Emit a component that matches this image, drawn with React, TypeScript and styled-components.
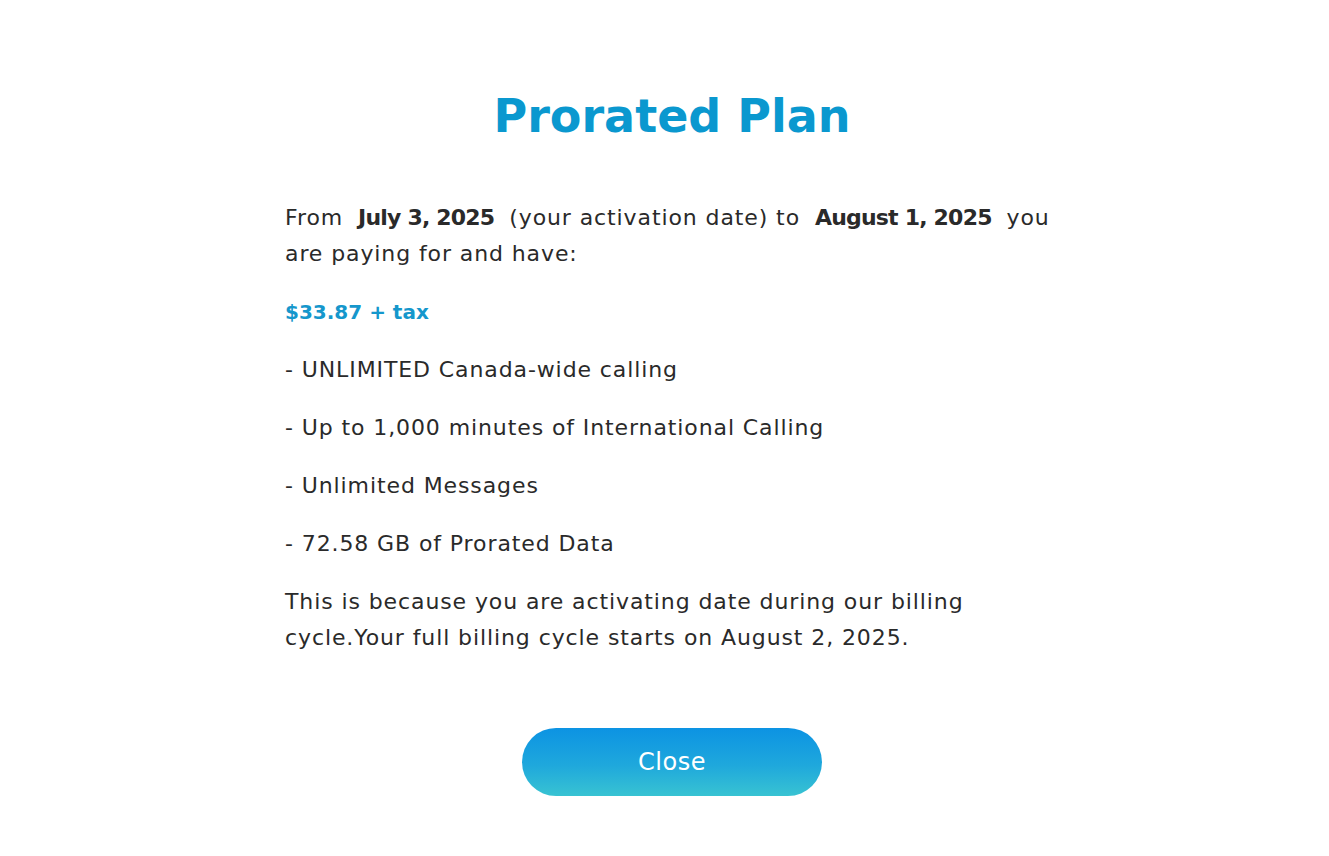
import React from "react";
import styled, { createGlobalStyle } from "styled-components";

const Global = createGlobalStyle`
  html, body { margin: 0; padding: 0; background: #ffffff; }
  body { font-family: "DejaVu Sans", "Open Sans", Arial, sans-serif; }
`;

const Page = styled.div`
  display: flex;
  flex-direction: column;
  align-items: center;
  padding: 84px 0 0 15px;
  min-height: 856px;
  box-sizing: border-box;
`;

const Title = styled.h1`
  margin: 0;
  font-family: "DejaVu Sans", sans-serif;
  font-weight: 700;
  font-size: 46px;
  line-height: 64px;
  color: #0a98cf;
`;

const Body = styled.div`
  width: 774px;
  margin-top: 52px;
  display: flex;
  flex-direction: column;
  gap: 22px;
`;

const Para = styled.p<{ $accent?: boolean }>`
  margin: 0;
  font-size: ${(p) => (p.$accent ? "20px" : "22px")};
  line-height: 36px;
  letter-spacing: ${(p) => (p.$accent ? "0" : "0.9px")};
  font-weight: ${(p) => (p.$accent ? 700 : 400)};
  color: ${(p) => (p.$accent ? "#1597cc" : "#2a2a2a")};
`;

const Strong = styled.b`
  font-weight: 700;
  letter-spacing: -0.8px;
  margin: 0 7px;
`;

const Button = styled.button`
  margin-top: 72px;
  width: 300px;
  height: 68px;
  border: none;
  border-radius: 34px;
  background: linear-gradient(180deg, #0c93e3 0%, #1fa8dc 55%, #38c3d2 100%);
  color: #ffffff;
  font-family: "DejaVu Sans", sans-serif;
  font-size: 24px;
  letter-spacing: 0.5px;
  cursor: pointer;
`;

export default function App() {
  return (
    <>
      <Global />
      <Page>
        <Title>Prorated Plan</Title>
        <Body>
          <Para>
            From <Strong>July 3, 2025</Strong> (your activation date) to{" "}
            <Strong>August 1, 2025</Strong> you are paying for and have:
          </Para>
          <Para $accent>$33.87 + tax</Para>
          <Para>- UNLIMITED Canada-wide calling</Para>
          <Para>- Up to 1,000 minutes of International Calling</Para>
          <Para>- Unlimited Messages</Para>
          <Para>- 72.58 GB of Prorated Data</Para>
          <Para>
            This is because you are activating date during our billing
            cycle.Your full billing cycle starts on August 2, 2025.
          </Para>
        </Body>
        <Button>Close</Button>
      </Page>
    </>
  );
}
